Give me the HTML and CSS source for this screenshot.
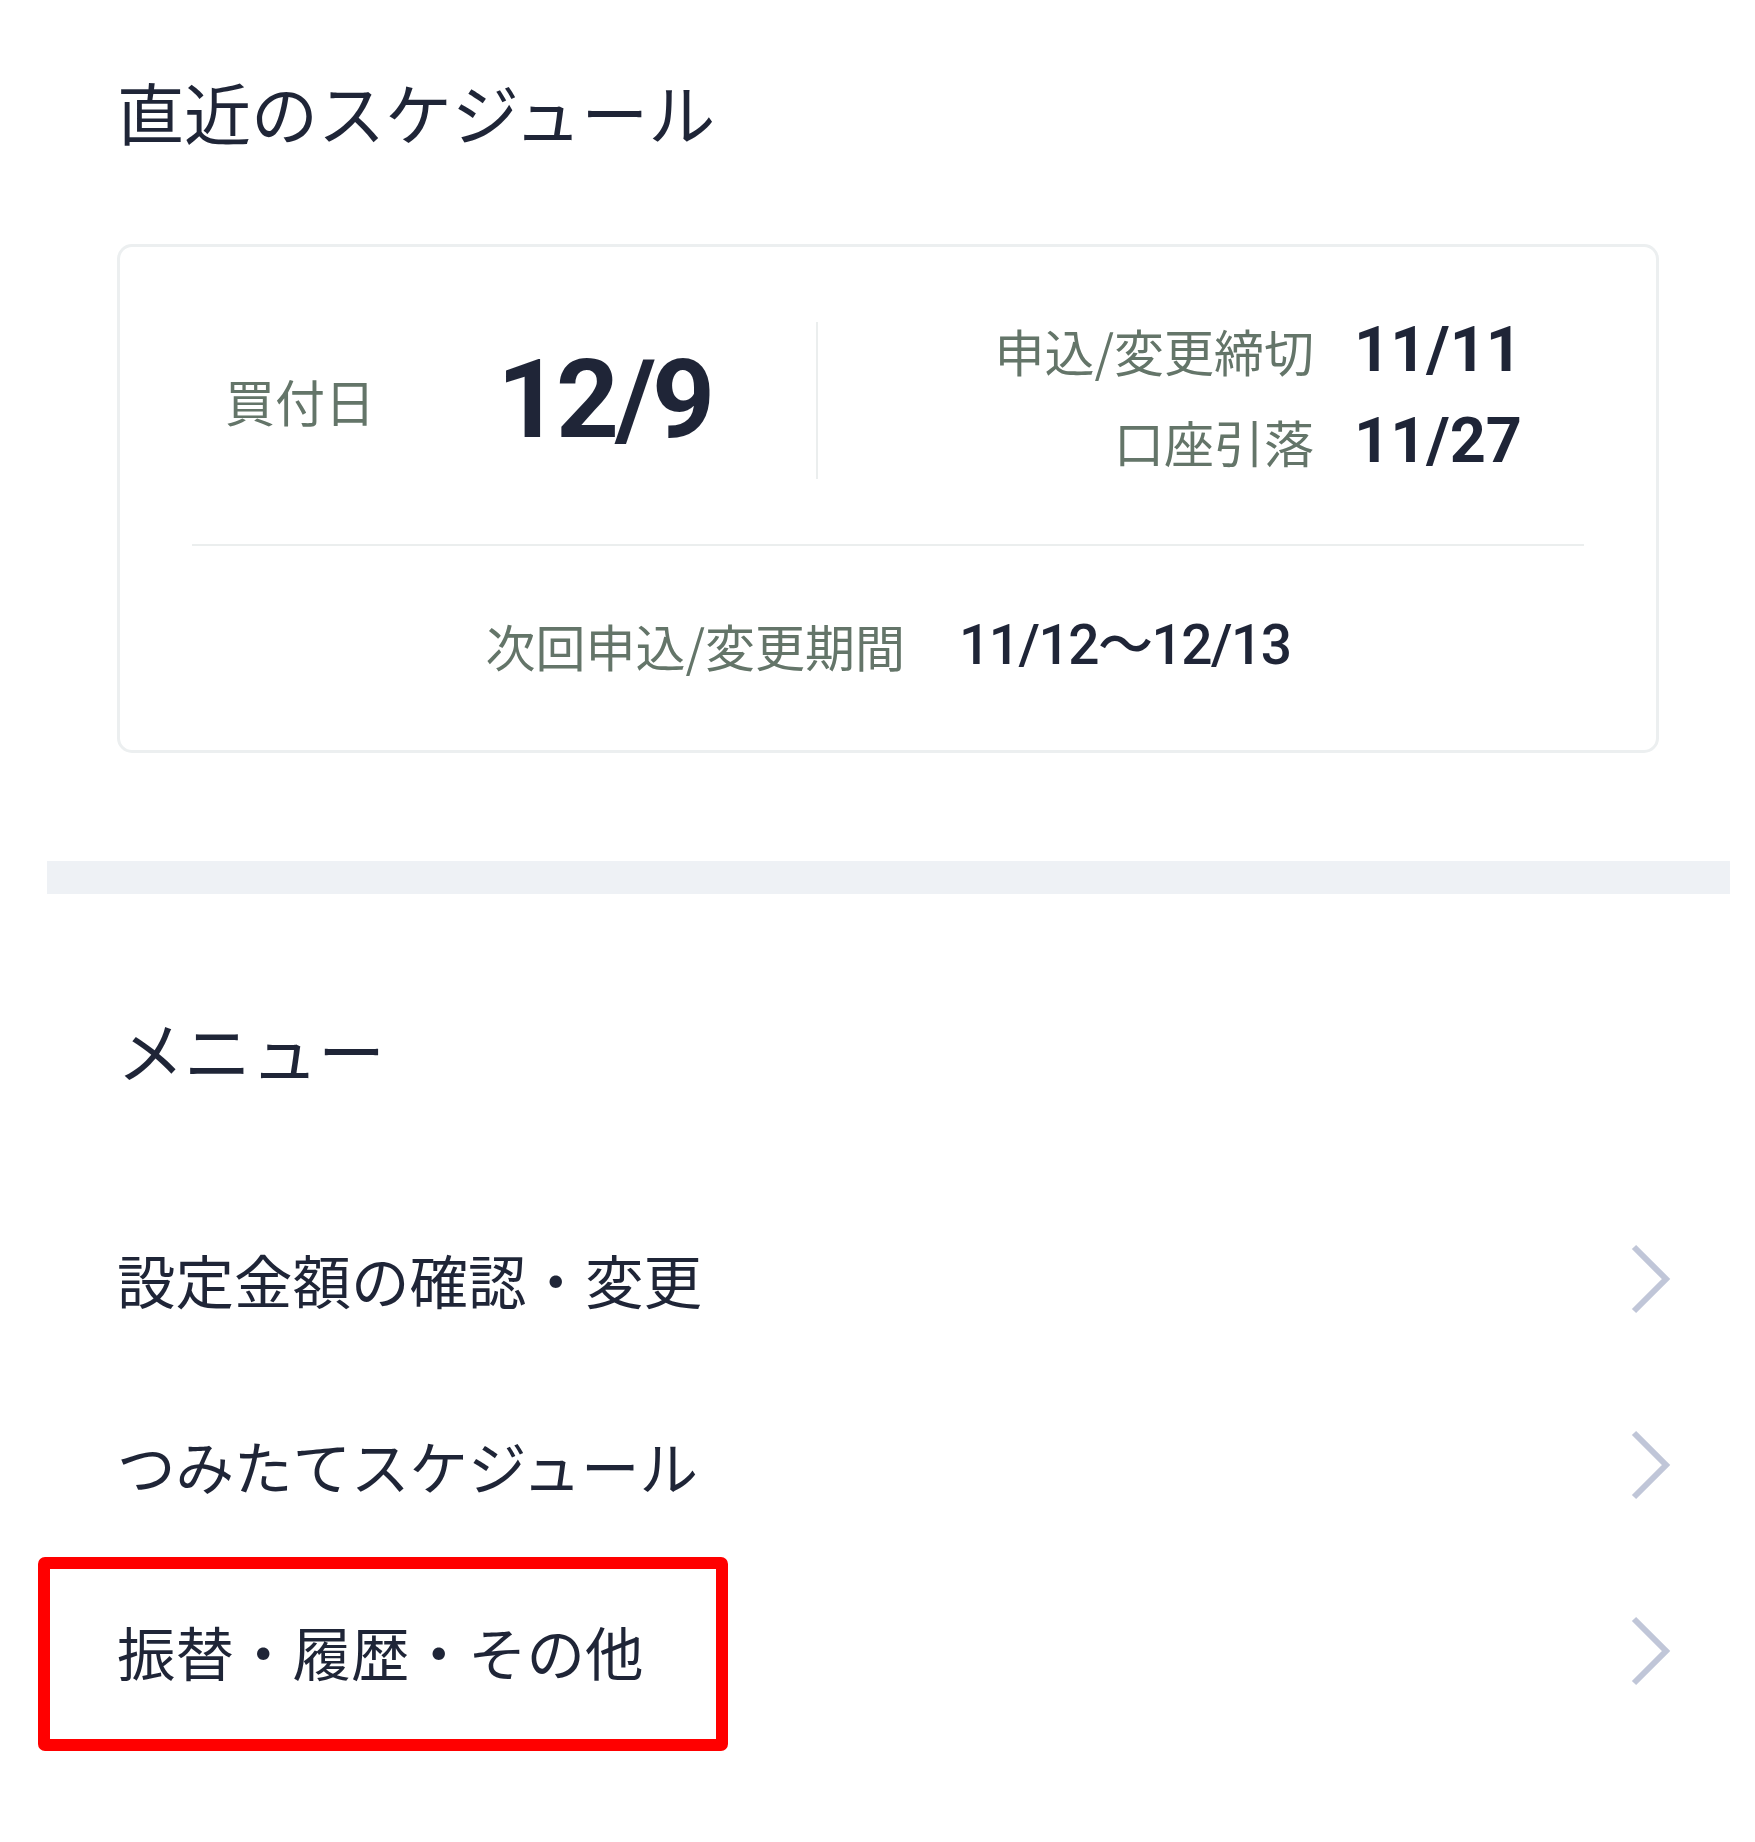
FILE: index.html
```html
<!DOCTYPE html>
<html lang="ja">

<head>
  <meta charset="UTF-8">
  <meta name="viewport" content="width=device-width, initial-scale=1.0">
  <title>つみたて - スケジュール</title>
  <link rel="stylesheet" href="styles.css">
</head>

<body>
  <div class="page">
    <section class="schedule">
      <h2 class="section-title">直近のスケジュール</h2>

      <div class="card">
        <div class="card-top">
          <div class="buy-date">
            <span class="label">買付日</span>
            <span class="big-date">12/9</span>
          </div>
          <div class="deadlines">
            <span class="label">申込/変更締切</span>
            <span class="date">11/11</span>
            <span class="label">口座引落</span>
            <span class="date">11/27</span>
          </div>
        </div>
        <div class="card-bottom">
          <span class="label">次回申込/変更期間</span>
          <span class="date period">11/12〜12/13</span>
        </div>
      </div>
    </section>

    <div class="band"></div>

    <section class="menu">
      <h2 class="section-title">メニュー</h2>

      <ul class="menu-list">
        <li class="menu-item">
          <span>設定金額の確認・変更</span>
          <svg class="chevron" viewBox="0 0 42 72"><polyline points="4,4 36,36 4,68" /></svg>
        </li>
        <li class="menu-item">
          <span>つみたてスケジュール</span>
          <svg class="chevron" viewBox="0 0 42 72"><polyline points="4,4 36,36 4,68" /></svg>
        </li>
        <li class="menu-item">
          <span>振替・履歴・その他</span>
          <svg class="chevron" viewBox="0 0 42 72"><polyline points="4,4 36,36 4,68" /></svg>
          <!-- 注目枠 -->
          <span class="highlight-box"></span>
        </li>
      </ul>
    </section>
  </div>
</body>

</html>
```

FILE: styles.css
```css
* {
  margin: 0;
  padding: 0;
  box-sizing: border-box;
}

body {
  font-family: Roboto, 'Noto Sans CJK JP', sans-serif;
  background: #ffffff;
  color: #1f2537;
}

.page {
  padding: 0 25px 0 47px;
}

.section-title {
  font-family: 'Noto Sans CJK JP', sans-serif;
  font-size: 67px;
  font-weight: 400;
  line-height: 1.4;
  color: #1f2537;
}

.schedule {
  padding: 64px 71px 0 70px;
}

.card {
  margin-top: 86px;
  height: 509px;
  border: 3px solid #eceff0;
  border-radius: 15px;
  display: flex;
  flex-direction: column;
}

.label {
  font-family: 'Noto Sans CJK JP', sans-serif;
  font-size: 50px;
  line-height: 1.4;
  color: #647569;
}

.date {
  font-family: Roboto, 'Noto Sans CJK JP', sans-serif;
  font-size: 63px;
  font-weight: 700;
  line-height: 1.2;
  color: #1f2537;
}

.card-top {
  display: flex;
  height: 299px;
  margin: 0 72px;
  padding: 75px 0 65px;
  border-bottom: 2px solid #ebeeee;
}

.buy-date {
  width: 626px;
  display: flex;
  align-items: center;
  padding-left: 33px;
  gap: 122px;
  border-right: 2px solid #ebeeee;
}

.big-date {
  font-family: Roboto, sans-serif;
  font-size: 110px;
  font-weight: 700;
  letter-spacing: -4px;
  line-height: 1;
  color: #1f2537;
}

.deadlines {
  flex: 1;
  display: grid;
  grid-template-columns: auto auto;
  justify-content: end;
  align-content: center;
  align-items: center;
  column-gap: 40px;
  row-gap: 39px;
  padding-right: 62px;
  padding-bottom: 9px;
}

.deadlines .label,
.deadlines .date {
  line-height: 52px;
}

.deadlines .label {
  text-align: right;
}

.card-bottom {
  flex: 1;
  display: flex;
  justify-content: center;
  align-items: center;
  gap: 54px;
  padding-bottom: 6px;
}

.period {
  font-size: 55px;
  font-weight: 500;
  letter-spacing: -1.5px;
}

.band {
  margin-top: 108px;
  height: 33px;
  background: #eef1f5;
}

.menu {
  padding: 108px 58px 100px 70px;
}

.menu-list {
  list-style: none;
  margin-top: 90px;
}

.menu-item {
  position: relative;
  height: 186px;
  display: flex;
  justify-content: space-between;
  align-items: center;
  font-family: 'Noto Sans CJK JP', sans-serif;
  font-size: 58.5px;
  line-height: 1.4;
  color: #1f2537;
}

.chevron {
  width: 42px;
  height: 72px;
  fill: none;
  stroke: #c0c6d8;
  stroke-width: 6;
}

.highlight-box {
  position: absolute;
  top: -1px;
  left: -79px;
  width: 690px;
  height: 194px;
  border: 12px solid #ff0000;
  border-radius: 7px;
}
```
